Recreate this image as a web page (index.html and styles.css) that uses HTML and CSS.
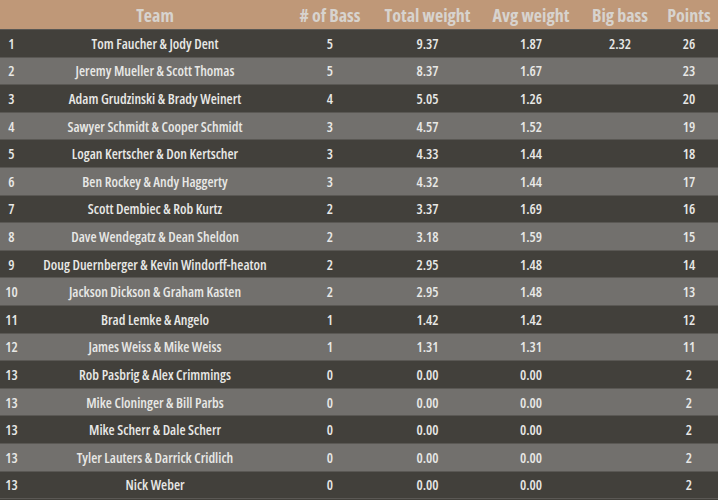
FILE: index.html
```html
<!DOCTYPE html>
<html>
<head>
<meta charset="utf-8">
<link rel="stylesheet" href="styles.css">
</head>
<body>
<table class="standings">
<colgroup>
<col class="c-rank"><col class="c-team"><col class="c-bass"><col class="c-total"><col class="c-avg"><col class="c-big"><col class="c-pts">
</colgroup>
<thead>
<tr><th></th><th>Team</th><th># of Bass</th><th>Total weight</th><th>Avg weight</th><th>Big bass</th><th>Points</th></tr>
</thead>
<tbody>
<tr><td>1</td><td>Tom Faucher &amp; Jody Dent</td><td>5</td><td>9.37</td><td>1.87</td><td>2.32</td><td>26</td></tr>
<tr><td>2</td><td>Jeremy Mueller &amp; Scott Thomas</td><td>5</td><td>8.37</td><td>1.67</td><td></td><td>23</td></tr>
<tr><td>3</td><td>Adam Grudzinski &amp; Brady Weinert</td><td>4</td><td>5.05</td><td>1.26</td><td></td><td>20</td></tr>
<tr><td>4</td><td>Sawyer Schmidt &amp; Cooper Schmidt</td><td>3</td><td>4.57</td><td>1.52</td><td></td><td>19</td></tr>
<tr><td>5</td><td>Logan Kertscher &amp; Don Kertscher</td><td>3</td><td>4.33</td><td>1.44</td><td></td><td>18</td></tr>
<tr><td>6</td><td>Ben Rockey &amp; Andy Haggerty</td><td>3</td><td>4.32</td><td>1.44</td><td></td><td>17</td></tr>
<tr><td>7</td><td>Scott Dembiec &amp; Rob Kurtz</td><td>2</td><td>3.37</td><td>1.69</td><td></td><td>16</td></tr>
<tr><td>8</td><td>Dave Wendegatz &amp; Dean Sheldon</td><td>2</td><td>3.18</td><td>1.59</td><td></td><td>15</td></tr>
<tr><td>9</td><td>Doug Duernberger &amp; Kevin Windorff-heaton</td><td>2</td><td>2.95</td><td>1.48</td><td></td><td>14</td></tr>
<tr><td>10</td><td>Jackson Dickson &amp; Graham Kasten</td><td>2</td><td>2.95</td><td>1.48</td><td></td><td>13</td></tr>
<tr><td>11</td><td>Brad Lemke &amp; Angelo</td><td>1</td><td>1.42</td><td>1.42</td><td></td><td>12</td></tr>
<tr><td>12</td><td>James Weiss &amp; Mike Weiss</td><td>1</td><td>1.31</td><td>1.31</td><td></td><td>11</td></tr>
<tr><td>13</td><td>Rob Pasbrig &amp; Alex Crimmings</td><td>0</td><td>0.00</td><td>0.00</td><td></td><td>2</td></tr>
<tr><td>13</td><td>Mike Cloninger &amp; Bill Parbs</td><td>0</td><td>0.00</td><td>0.00</td><td></td><td>2</td></tr>
<tr><td>13</td><td>Mike Scherr &amp; Dale Scherr</td><td>0</td><td>0.00</td><td>0.00</td><td></td><td>2</td></tr>
<tr><td>13</td><td>Tyler Lauters &amp; Darrick Cridlich</td><td>0</td><td>0.00</td><td>0.00</td><td></td><td>2</td></tr>
<tr><td>13</td><td>Nick Weber</td><td>0</td><td>0.00</td><td>0.00</td><td></td><td>2</td></tr>
</tbody>
</table>
</body>
</html>
```
FILE: styles.css
```css
html, body {
  margin: 0;
  padding: 0;
  background: #42403b;
}
.standings {
  width: 718px;
  border-collapse: collapse;
  table-layout: fixed;
  font-family: "Open Sans", "DejaVu Sans Condensed", sans-serif;
  font-stretch: 75%;
  font-weight: 600;
}
.c-rank { width: 23px; }
.c-team { width: 264px; }
.c-bass { width: 86px; }
.c-total { width: 109px; }
.c-avg { width: 98px; }
.c-big { width: 80px; }
.c-pts { width: 58px; }
.standings th {
  background: #bf9878;
  color: #d7d3ce;
  font-size: 18px;
  height: 29px;
  padding: 0;
  text-align: center;
  border-bottom: 1px solid #5a5854;
  white-space: nowrap;
}
.standings td {
  height: 26.6px;
  padding: 0;
  text-align: center;
  color: #e8e8e6;
  font-size: 14px;
  border-bottom: 1px solid #5a5854;
  white-space: nowrap;
}
.standings tbody tr:nth-child(odd) td { background: #42403b; }
.standings tbody tr:nth-child(even) td { background: #72706d; }
```
